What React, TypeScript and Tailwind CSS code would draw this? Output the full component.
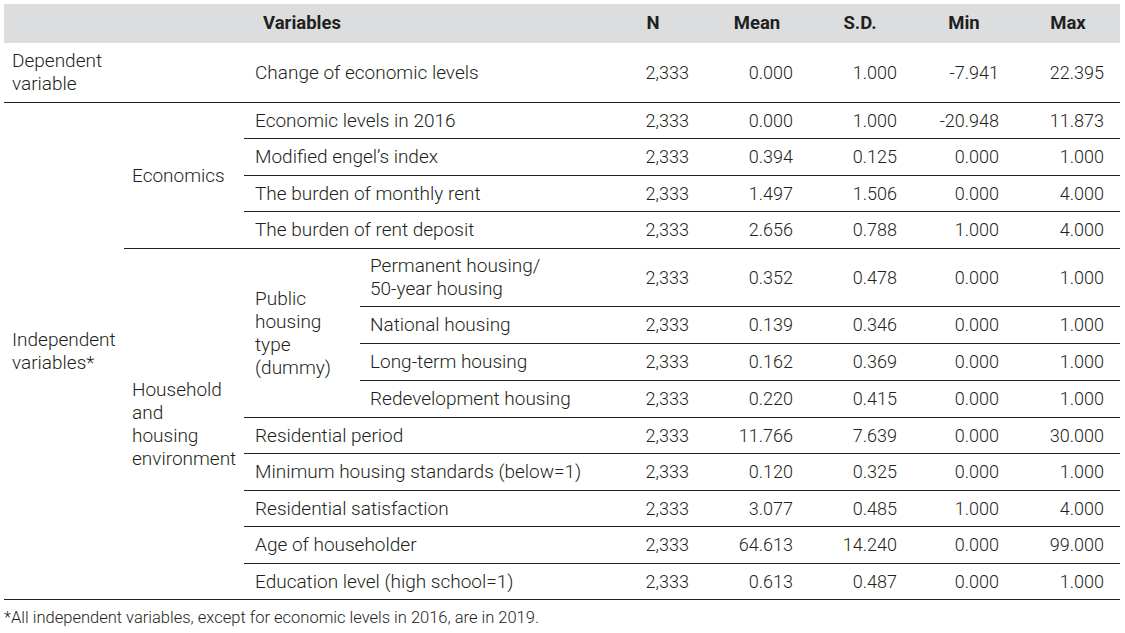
const line = "border-b border-[#231f20]";
const cell = "px-[8px] align-middle text-[19px] leading-[23px]";

type Nums = [string, string, string, string, string];

function NumCells({ v }: { v: Nums }) {
  const pads = ["pr-[17px]", "pr-[15px]", "pr-[15px]", "pr-[17px]", "pr-[16px]"];
  return (
    <>
      {v.map((n, i) => (
        <td key={i} className={`${pads[i]} text-right align-middle ${line}`}>
          {n}
        </td>
      ))}
    </>
  );
}

const n = "2,333";

export default function App() {
  return (
    <div className="min-h-[633px] w-[1125px] bg-white pl-[4px] pt-[4px] text-[18px] font-light text-[#231f20]" style={{ fontFamily: "Roboto, 'Liberation Sans', sans-serif" }}>
      <table className="w-[1116px] table-fixed border-collapse">
        <colgroup>
          <col className="w-[120px]" />
          <col className="w-[120px]" />
          <col className="w-[116px]" />
          <col className="w-[240px]" />
          <col className="w-[106px]" />
          <col className="w-[102px]" />
          <col className="w-[104px]" />
          <col className="w-[104px]" />
          <col className="w-[104px]" />
        </colgroup>
        <thead>
          <tr className="h-[39px] bg-[#dcdddf] text-[18.5px] font-bold">
            <th colSpan={4} className="text-center">Variables</th>
            <th className="text-center">N</th>
            <th className="text-center">Mean</th>
            <th className="text-center">S.D.</th>
            <th className="text-center">Min</th>
            <th className="text-center">Max</th>
          </tr>
        </thead>
        <tbody>
          <tr className="h-[59px]">
            <td colSpan={2} className={`${cell} ${line}`}>Dependent<br />variable</td>
            <td colSpan={2} className={`${cell} pl-[11px] ${line}`}>Change of economic levels</td>
            <NumCells v={[n, "0.000", "1.000", "-7.941", "22.395"]} />
          </tr>

          {/* Economics */}
          <tr className="h-[36.5px]">
            <td rowSpan={13} className={`${cell} ${line}`}>Independent<br />variables*</td>
            <td rowSpan={4} className={`${cell} ${line}`}>Economics</td>
            <td colSpan={2} className={`${cell} pl-[11px] ${line}`}>Economic levels in 2016</td>
            <NumCells v={[n, "0.000", "1.000", "-20.948", "11.873"]} />
          </tr>
          <tr className="h-[36.5px]">
            <td colSpan={2} className={`${cell} pl-[11px] ${line}`}>Modified engel’s index</td>
            <NumCells v={[n, "0.394", "0.125", "0.000", "1.000"]} />
          </tr>
          <tr className="h-[36.5px]">
            <td colSpan={2} className={`${cell} pl-[11px] ${line}`}>The burden of monthly rent</td>
            <NumCells v={[n, "1.497", "1.506", "0.000", "4.000"]} />
          </tr>
          <tr className="h-[36.5px]">
            <td colSpan={2} className={`${cell} pl-[11px] ${line}`}>The burden of rent deposit</td>
            <NumCells v={[n, "2.656", "0.788", "1.000", "4.000"]} />
          </tr>

          {/* Household and housing environment */}
          <tr className="h-[58px]">
            <td rowSpan={9} className={`${cell} ${line}`}>Household<br />and<br />housing<br />environment</td>
            <td rowSpan={4} className={`${cell} pl-[11px] ${line}`}>Public<br />housing<br />type<br />(dummy)</td>
            <td className={`${cell} pl-[10px] ${line}`}>Permanent housing/<br />50-year housing</td>
            <NumCells v={[n, "0.352", "0.478", "0.000", "1.000"]} />
          </tr>
          <tr className="h-[37px]">
            <td className={`${cell} pl-[10px] ${line}`}>National housing</td>
            <NumCells v={[n, "0.139", "0.346", "0.000", "1.000"]} />
          </tr>
          <tr className="h-[37px]">
            <td className={`${cell} pl-[10px] ${line}`}>Long-term housing</td>
            <NumCells v={[n, "0.162", "0.369", "0.000", "1.000"]} />
          </tr>
          <tr className="h-[37px]">
            <td className={`${cell} pl-[10px] ${line}`}>Redevelopment housing</td>
            <NumCells v={[n, "0.220", "0.415", "0.000", "1.000"]} />
          </tr>
          <tr className="h-[36.5px]">
            <td colSpan={2} className={`${cell} pl-[11px] ${line}`}>Residential period</td>
            <NumCells v={[n, "11.766", "7.639", "0.000", "30.000"]} />
          </tr>
          <tr className="h-[36.5px]">
            <td colSpan={2} className={`${cell} pl-[11px] ${line}`}>Minimum housing standards (below=1)</td>
            <NumCells v={[n, "0.120", "0.325", "0.000", "1.000"]} />
          </tr>
          <tr className="h-[36.5px]">
            <td colSpan={2} className={`${cell} pl-[11px] ${line}`}>Residential satisfaction</td>
            <NumCells v={[n, "3.077", "0.485", "1.000", "4.000"]} />
          </tr>
          <tr className="h-[36.5px]">
            <td colSpan={2} className={`${cell} pl-[11px] ${line}`}>Age of householder</td>
            <NumCells v={[n, "64.613", "14.240", "0.000", "99.000"]} />
          </tr>
          <tr className="h-[36.5px]">
            <td colSpan={2} className={`${cell} pl-[11px] ${line}`}>Education level (high school=1)</td>
            <NumCells v={[n, "0.613", "0.487", "0.000", "1.000"]} />
          </tr>
        </tbody>
      </table>
      <p className="mt-[8px] text-[16.5px] leading-[20px]">
        *All independent variables, except for economic levels in 2016, are in 2019.
      </p>
    </div>
  );
}
